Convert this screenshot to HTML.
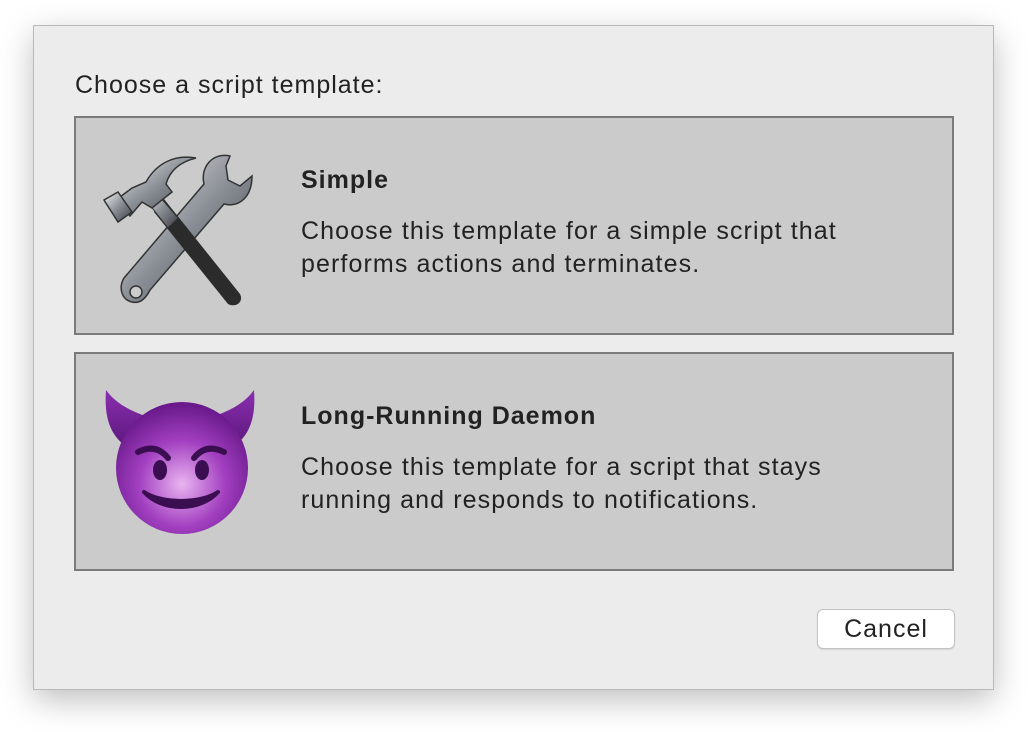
<!DOCTYPE html>
<html><head><meta charset="utf-8"><style>
html,body{margin:0;padding:0;width:1028px;height:732px;background:#fff;overflow:hidden;font-family:"Liberation Sans",sans-serif;color:#222}
.dlg{position:absolute;left:33px;top:25px;width:961px;height:665px;background:#ececec;border:1px solid #b8b8b8;box-sizing:border-box;box-shadow:0 10px 30px rgba(0,0,0,.25)}
.lbl{position:absolute;left:75px;top:71px;font-size:25px;letter-spacing:1px}
.box{position:absolute;left:74px;width:880px;height:219px;background:#cbcbcb;border:2px solid #7b7b7b;box-sizing:border-box}
.t{position:absolute;left:225px;font-size:25px;font-weight:bold;letter-spacing:1px}
.d{position:absolute;left:225px;font-size:25px;line-height:33px;width:560px;letter-spacing:1.1px}
.icon{position:absolute}
.btn{position:absolute;left:817px;top:609px;width:138px;height:40px;background:#fff;border:1px solid #c3c3c3;border-radius:6px;box-sizing:border-box;font-size:25px;letter-spacing:1px;text-align:center;line-height:38px;box-shadow:0 1px 1px rgba(0,0,0,.1)}
</style></head><body>
<div class="dlg"></div>
<div class="lbl">Choose a script template:</div>
<div class="box" style="top:116px">
  <svg class="icon" style="left:24px;top:34px" width="160" height="160" viewBox="0 0 160 160">
    <defs>
      <linearGradient id="m" x1="0" y1="0" x2="1" y2="1"><stop offset="0" stop-color="#f2f2f2"/><stop offset=".5" stop-color="#8a8f96"/><stop offset="1" stop-color="#3c3f44"/></linearGradient>
    </defs>
    <path d="M130 4 C112 0 100 16 104 32 L24 126 C18 136 22 148 32 150 C40 152 46 146 50 138 L124 52 C140 56 152 44 152 24 L140 34 L128 28 L126 14 Z" fill="url(#m)" stroke="#333" stroke-width="1.5"/>
    <circle cx="36" cy="140" r="6" fill="#cbcbcb" stroke="#333" stroke-width="1.5"/>
    <path d="M60 42 L140 142 C144 150 136 156 128 152 L54 60 Z" fill="#2b2b2b"/>
    <path d="M54 38 L78 66 L68 76 L46 48 Z" fill="url(#m)" stroke="#333" stroke-width="1"/>
    <path d="M16 48 L32 36 L46 30 C56 12 74 2 96 6 C80 10 70 18 66 32 L72 40 L52 56 L42 50 L30 64 Z" fill="url(#m)" stroke="#333" stroke-width="1.5"/>
    <path d="M4 48 L18 40 L32 60 L18 70 Z" fill="url(#m)" stroke="#333" stroke-width="1.5"/>
  </svg>
  <div class="t" style="top:48px">Simple</div>
  <div class="d" style="top:97px">Choose this template for a simple script that performs actions and terminates.</div>
</div>
<div class="box" style="top:352px">
  <svg class="icon" style="left:26px;top:34px" width="156" height="150" viewBox="0 0 156 150">
    <defs>
      <radialGradient id="f" cx=".5" cy=".62" r=".6"><stop offset="0" stop-color="#e9b4f0"/><stop offset=".55" stop-color="#a23fc0"/><stop offset="1" stop-color="#6a1a8c"/></radialGradient>
      <linearGradient id="h" x1="0" y1="0" x2="0" y2="1"><stop offset="0" stop-color="#8a2fb0"/><stop offset="1" stop-color="#5a167a"/></linearGradient>
    </defs>
    <path d="M4 2 C2 30 8 50 30 62 L50 30 C30 24 14 16 4 2 Z" fill="url(#h)"/>
    <path d="M152 2 C154 30 148 50 126 62 L106 30 C126 24 142 16 152 2 Z" fill="url(#h)"/>
    <circle cx="80" cy="80" r="66" fill="url(#f)"/>
    <path d="M36 64 C48 58 58 60 66 70" stroke="#3a0e50" stroke-width="6" fill="none" stroke-linecap="round"/>
    <path d="M122 64 C110 58 100 60 92 70" stroke="#3a0e50" stroke-width="6" fill="none" stroke-linecap="round"/>
    <ellipse cx="58" cy="82" rx="7" ry="10" fill="#3a0e50"/>
    <ellipse cx="100" cy="82" rx="7" ry="10" fill="#3a0e50"/>
    <path d="M42 104 C60 124 98 124 116 104 C98 116 60 116 42 104 Z" fill="#3a0e50" stroke="#3a0e50" stroke-width="4" stroke-linejoin="round"/>
  </svg>
  <div class="t" style="top:48px">Long-Running Daemon</div>
  <div class="d" style="top:97px">Choose this template for a script that stays running and responds to notifications.</div>
</div>
<div class="btn">Cancel</div>
</body></html>
